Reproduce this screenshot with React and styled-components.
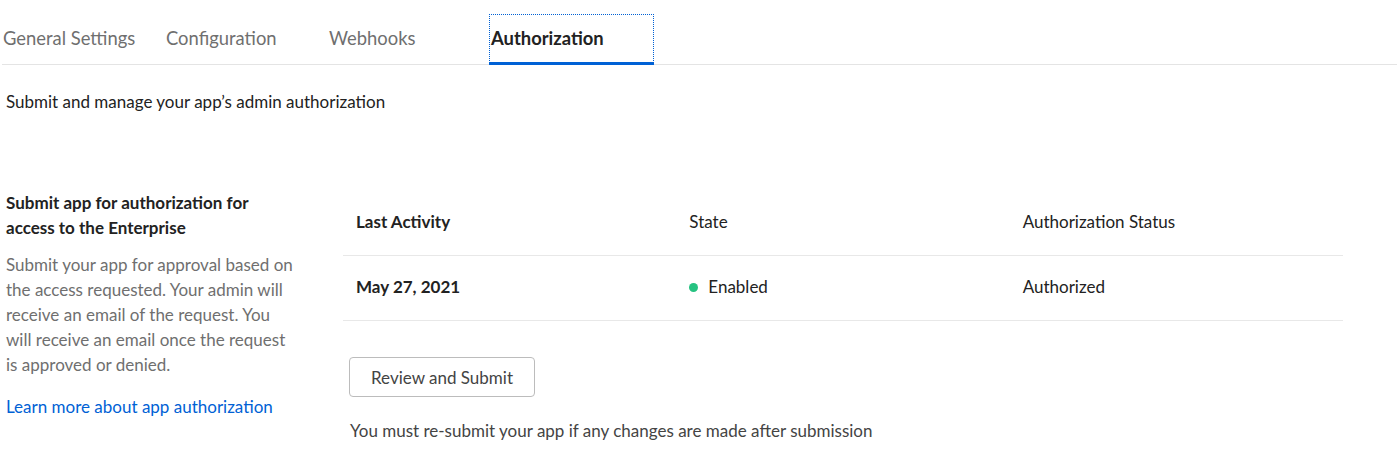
import React from "react";
import styled, { createGlobalStyle } from "styled-components";

const tabs = ["General Settings", "Configuration", "Webhooks", "Authorization"];

const rows = [
  {
    date: "May 27, 2021",
    state: "Enabled",
    status: "Authorized",
  },
];

const App = () => {
  return (
    <Page>
      <Global />
      <TabBar>
        {tabs.map((t) => (
          <Tab key={t} active={t === "Authorization"}>
            {t}
          </Tab>
        ))}
      </TabBar>
      <Intro>Submit and manage your app’s admin authorization</Intro>
      <Section>
        <Aside>
          <AsideTitle>
            Submit app for authorization for access to the Enterprise
          </AsideTitle>
          <AsideText>
            Submit your app for approval based on the access requested. Your
            admin will receive an email of the request. You will receive an
            email once the request is approved or denied.
          </AsideText>
          <LearnLink href="#">Learn more about app authorization</LearnLink>
        </Aside>
        <Main>
          <Table>
            <thead>
              <tr>
                <Th bold>Last Activity</Th>
                <Th>State</Th>
                <Th>Authorization Status</Th>
              </tr>
            </thead>
            <tbody>
              {rows.map((r) => (
                <tr key={r.date}>
                  <Td bold>{r.date}</Td>
                  <Td>
                    <Dot />
                    {r.state}
                  </Td>
                  <Td>{r.status}</Td>
                </tr>
              ))}
            </tbody>
          </Table>
          <SubmitButton>Review and Submit</SubmitButton>
          <Note>You must re-submit your app if any changes are made after submission</Note>
        </Main>
      </Section>
    </Page>
  );
};

const Global = createGlobalStyle`
  body {
    margin: 0;
    background: #fff;
    font-family: Lato, "Open Sans", sans-serif;
    color: #222;
  }
`;

const Page = styled.div`
  padding: 14px 0 0 2px;
`;

const TabBar = styled.div`
  display: flex;
  border-bottom: 1px solid #e4e4e4;
`;

const Tab = styled.div`
  width: 163px;
  box-sizing: border-box;
  height: 51px;
  padding-left: 1px;
  display: flex;
  align-items: center;
  font-size: 18.4px;
  color: ${(p) => (p.active ? "#222" : "#6f6f6f")};
  font-weight: ${(p) => (p.active ? 700 : 400)};
  border-bottom: 3px solid ${(p) => (p.active ? "#0061d5" : "transparent")};
  margin-bottom: -1px;
  ${(p) =>
    p.active &&
    `
    outline: 1px dotted #0061d5;
    outline-offset: -1px;
    width: 165px;
    padding-left: 2px;
    margin-left: -2px;
  `}
`;

const Intro = styled.p`
  margin: 27px 0 0 4px;
  font-size: 17px;
  line-height: 20px;
  color: #222;
`;

const Section = styled.div`
  display: grid;
  grid-template-columns: 310px 1000px;
  column-gap: 27px;
  margin: 78px 0 0 4px;
`;

const Aside = styled.div`
  width: 292px;
`;

const AsideTitle = styled.h3`
  margin: 0;
  font-size: 17px;
  line-height: 25px;
  font-weight: 700;
  color: #222;
`;

const AsideText = styled.p`
  margin: 12px 0 0;
  font-size: 17px;
  line-height: 25px;
  color: #6f6f6f;
`;

const LearnLink = styled.a`
  display: block;
  margin-top: 17px;
  font-size: 17px;
  line-height: 25px;
  color: #0061d5;
  text-decoration: none;
`;

const Main = styled.div`
  display: flex;
  flex-direction: column;
  align-items: flex-start;
`;

const Table = styled.table`
  width: 1000px;
  border-collapse: collapse;
  table-layout: fixed;
`;

const Th = styled.th`
  text-align: left;
  padding: 22px 13px 23px;
  font-size: 17px;
  line-height: 20px;
  font-weight: ${(p) => (p.bold ? 700 : 400)};
  color: #222;
  border-bottom: 1px solid #e8e8e8;
`;

const Td = styled.td`
  padding: 21px 13px 23px;
  font-size: 17px;
  line-height: 20px;
  font-weight: ${(p) => (p.bold ? 700 : 400)};
  color: #222;
  border-bottom: 1px solid #e8e8e8;
`;

const Dot = styled.span`
  display: inline-block;
  width: 9px;
  height: 9px;
  border-radius: 50%;
  background: #26c281;
  margin-right: 10px;
  vertical-align: 1px;
`;

const SubmitButton = styled.button`
  margin: 36px 0 0 6px;
  height: 40px;
  padding: 0 21px;
  background: #fff;
  border: 1px solid #bcbcbc;
  border-radius: 4px;
  font-family: Lato, sans-serif;
  font-size: 17px;
  color: #444;
  cursor: pointer;
`;

const Note = styled.p`
  margin: 24px 0 0 7px;
  font-size: 17px;
  line-height: 20px;
  color: #444;
`;

export default App;
